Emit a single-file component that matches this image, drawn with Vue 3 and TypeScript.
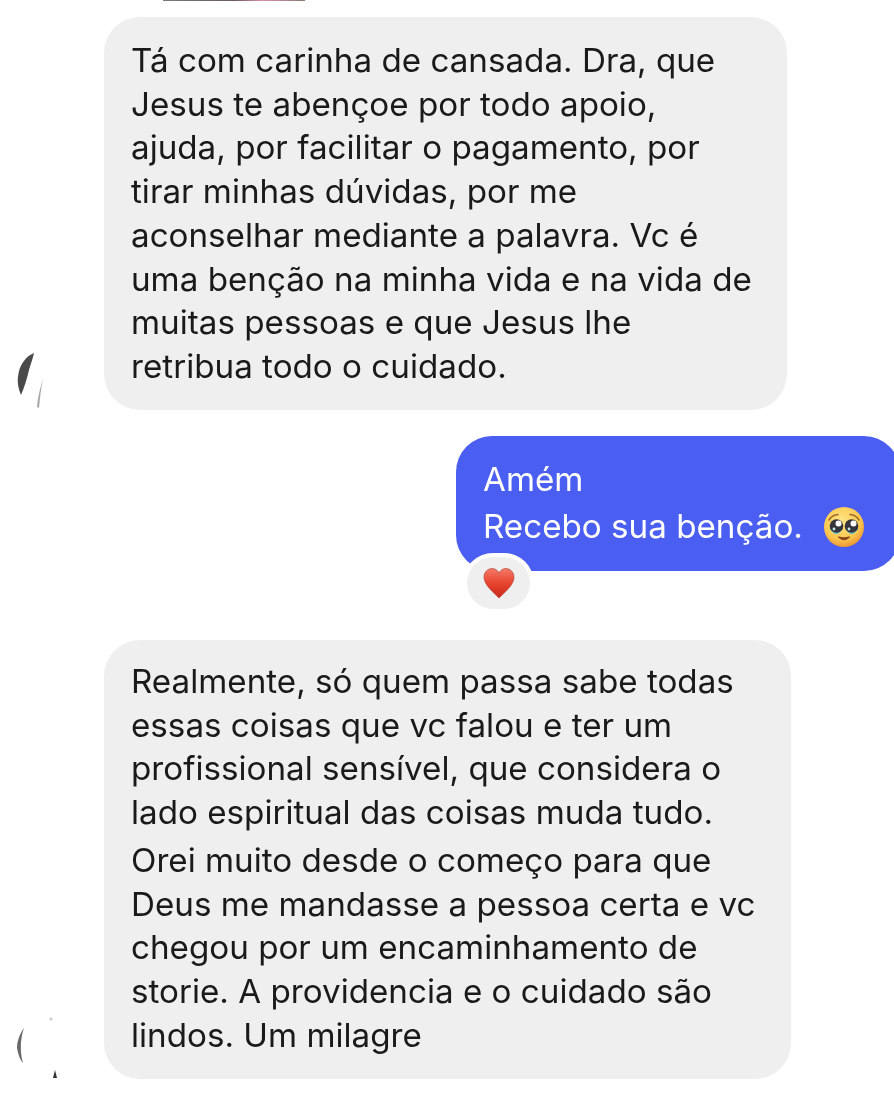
<script setup lang="ts">
interface Message {
  id: number;
  paragraphs: string[][];
}

const first: Message = {
  id: 1,
  paragraphs: [
    [
      "Tá com carinha de cansada. Dra, que",
      "Jesus te abençoe por todo apoio,",
      "ajuda, por facilitar o pagamento, por",
      "tirar minhas dúvidas, por me",
      "aconselhar mediante a palavra. Vc é",
      "uma benção na minha vida e na vida de",
      "muitas pessoas e que Jesus lhe",
      "retribua todo o cuidado.",
    ],
  ],
};

const second: Message = {
  id: 2,
  paragraphs: [
    [
      "Realmente, só quem passa sabe todas",
      "essas coisas que vc falou e ter um",
      "profissional sensível, que considera o",
      "lado espiritual das coisas muda tudo.",
    ],
    [
      "Orei muito desde o começo para que",
      "Deus me mandasse a pessoa certa e vc",
      "chegou por um encaminhamento de",
      "storie. A providencia e o cuidado são",
      "lindos. Um milagre",
    ],
  ],
};
</script>

<template>
  <main class="chat">
    <div class="top-strip"></div>

    <div class="row row-first">
      <div class="gutter">
        <svg class="smudge" width="104" height="90" viewBox="0 0 104 90">
          <path d="M34 33C26 36 19 45 18 57C17 63 19 70 21 75C24 68 27 59 29 50C31 43 33 38 34 33Z" fill="#4a4a4a" />
          <path d="M43 58C41 66 38 75 37 87L39 88C40 78 41 68 43 58Z" fill="#a8a8a8" />
        </svg>
      </div>
      <div class="bubble bubble-first">
        <p v-for="(para, i) in first.paragraphs" :key="i" class="para">
          <span v-for="line in para" :key="line" class="line">{{ line }}</span>
        </p>
      </div>
    </div>

    <div class="row-own">
      <div class="bubble-own">
        <span class="line">Amém</span>
        <span class="line own-last">
          Recebo sua benção.
          <svg class="pleading" width="42" height="42" viewBox="0 0 42 42">
            <defs>
              <radialGradient id="face" cx="45%" cy="35%" r="70%">
                <stop offset="0" stop-color="#ffe586" />
                <stop offset="0.65" stop-color="#fbc850" />
                <stop offset="1" stop-color="#e88a2c" />
              </radialGradient>
            </defs>
            <circle cx="21" cy="21" r="20" fill="url(#face)" />
            <path d="M6 14Q9 9 15 8.500M36 14Q33 9 27 8.500" fill="none" stroke="#9a6a2a" stroke-width="1.500" stroke-linecap="round" />
            <path d="M6.500 22Q13.500 34 20 22ZM22 22Q28.500 34 35.500 22Z" fill="#68c8d4" />
            <circle cx="13.500" cy="20" r="6.800" fill="#34353d" />
            <circle cx="28.500" cy="20" r="6.800" fill="#34353d" />
            <circle cx="15.500" cy="17.500" r="3" fill="#fff" />
            <circle cx="30.500" cy="17.500" r="3" fill="#fff" />
            <circle cx="11" cy="23" r="1.400" fill="#cfe8ee" />
            <circle cx="26" cy="23" r="1.400" fill="#cfe8ee" />
            <path d="M15.500 31Q21 36 26.500 31Q21 32.500 15.500 31Z" fill="#8a4a1c" stroke="#8a4a1c" stroke-width="1.200" stroke-linejoin="round" />
          </svg>
        </span>
        <div class="reaction">
          <svg width="32" height="32" viewBox="0 0 32 32">
            <defs>
              <linearGradient id="heart" x1="0" y1="0" x2="0" y2="1">
                <stop offset="0" stop-color="#f47a68" />
                <stop offset="0.5" stop-color="#e8442f" />
                <stop offset="1" stop-color="#c92a1c" />
              </linearGradient>
            </defs>
            <path d="M16 31C10 25 1 18 1 10C1 5 5 1.500 9 1.500C12 1.500 14.600 3 16 6C17.400 3 20 1.500 23 1.500C27 1.500 31 5 31 10C31 18 22 25 16 31Z" fill="url(#heart)" stroke="#a83a2c" stroke-width="0.600" />
          </svg>
        </div>
      </div>
    </div>

    <div class="row row-second">
      <div class="gutter">
        <svg class="smudge" width="104" height="90" viewBox="0 0 104 90">
          <path d="M24 29C19 36 17 43 17 49C18 55 20 61 23 64C20 54 20 40 24 29Z" fill="#6a6a6a" />
          <circle cx="51" cy="20" r="1.500" fill="#c8c8c8" />
          <path d="M55 71L53 79H57Z" fill="#333" />
        </svg>
      </div>
      <div class="bubble bubble-second">
        <p v-for="(para, i) in second.paragraphs" :key="i" class="para">
          <span v-for="line in para" :key="line" class="line">{{ line }}</span>
        </p>
      </div>
    </div>
  </main>
</template>

<style>
html,
body {
  margin: 0;
  background: #fff;
}
</style>

<style scoped>
.chat {
  width: 894px;
  height: 1102px;
  overflow: hidden;
  background: #fff;
  font-family: Inter, "Liberation Sans", sans-serif;
  font-size: 33.2px;
  color: #1a1a1a;
  filter: blur(0.4px);
}

.top-strip {
  width: 142px;
  height: 1px;
  margin-left: 163px;
  margin-bottom: 16px;
  background: linear-gradient(90deg, #7a7a7a, #6a5a60 50%, #d890b0 70%, #8a7a70);
}

.row {
  display: flex;
  align-items: flex-end;
}

.gutter {
  width: 104px;
  flex-shrink: 0;
}

.smudge {
  display: block;
}

.row-second .smudge {
  margin-bottom: -10px;
}

.bubble {
  box-sizing: border-box;
  background: #efefef;
  border-radius: 36px;
  padding: 22px 27px;
}

.bubble-first {
  width: 683px;
  height: 393px;
}

.bubble-second {
  width: 687px;
  height: 439px;
  margin-top: 69px;
  padding-top: 20px;
}

.para {
  margin: 0 0 4px;
}

.line {
  display: block;
  line-height: 43.7px;
  white-space: nowrap;
}

.row-own {
  display: flex;
  justify-content: flex-end;
  margin-top: 26px;
}

.bubble-own {
  position: relative;
  box-sizing: border-box;
  width: 444px;
  height: 135px;
  margin-right: -6px;
  padding: 20px 27px;
  background: #4a5ef2;
  border-radius: 36px;
  color: #fff;
}

.bubble-own .line {
  line-height: 47px;
}

.own-last {
  display: flex;
  align-items: center;
  gap: 20px;
}

.pleading {
  flex-shrink: 0;
}

.reaction {
  position: absolute;
  left: 11px;
  top: 121px;
  box-sizing: border-box;
  width: 63px;
  height: 52px;
  display: flex;
  align-items: center;
  justify-content: center;
  background: #efefef;
  border-radius: 26px;
  box-shadow: 0 0 0 4px #fff;
}
</style>
